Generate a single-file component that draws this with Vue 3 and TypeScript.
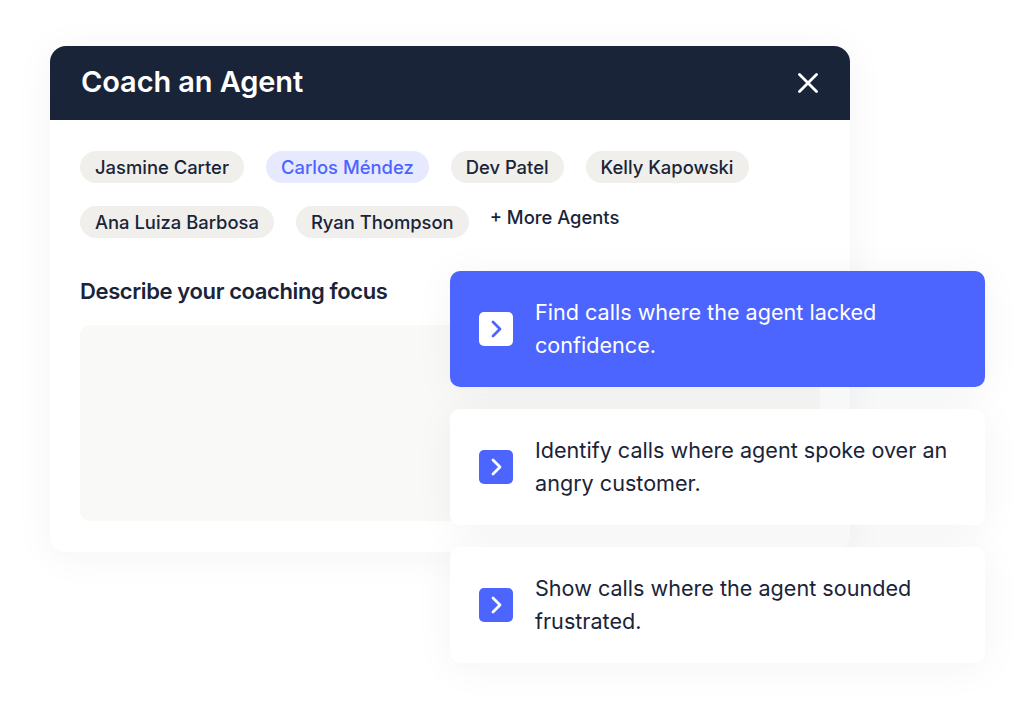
<script setup lang="ts">
const row1 = [
  { name: "Jasmine Carter", active: false },
  { name: "Carlos Méndez", active: true },
  { name: "Dev Patel", active: false },
  { name: "Kelly Kapowski", active: false },
];
const row2 = ["Ana Luiza Barbosa", "Ryan Thompson"];

const suggestions = [
  { text: "Find calls where the agent lacked confidence.", selected: true },
  { text: "Identify calls where agent spoke over an angry customer.", selected: false },
  { text: "Show calls where the agent sounded frustrated.", selected: false },
];
</script>

<template>
  <div class="page">
    <section class="modal">
      <header class="modal-header">
        <h1 class="modal-title">Coach an Agent</h1>
        <button class="close-btn" aria-label="Close">
          <svg viewBox="0 0 20 20" width="20" height="20" fill="none" stroke="currentColor" stroke-width="2.8" stroke-linecap="round">
            <path d="M1.5 1.5l17 17M18.5 1.5l-17 17" />
          </svg>
        </button>
      </header>
      <div class="modal-body">
        <div class="chip-row">
          <span v-for="agent in row1" :key="agent.name" class="chip" :class="{ active: agent.active }">{{ agent.name }}</span>
        </div>
        <div class="chip-row">
          <span v-for="name in row2" :key="name" class="chip">{{ name }}</span>
          <span class="more">+ More Agents</span>
        </div>
        <h2 class="focus-label">Describe your coaching focus</h2>
        <div class="focus-input"></div>
      </div>
    </section>

    <div class="suggestions">
      <div v-for="item in suggestions" :key="item.text" class="suggestion" :class="{ selected: item.selected }">
        <span class="arrow">
          <svg viewBox="0 0 12 18" width="12" height="18" fill="none" stroke="currentColor" stroke-width="2.8" stroke-linecap="round" stroke-linejoin="round">
            <path d="M3 2l7 7-7 7" />
          </svg>
        </span>
        <p class="suggestion-text">{{ item.text }}</p>
      </div>
    </div>
  </div>
</template>

<style>
html,
body {
  margin: 0;
  background: #fff;
  overflow: hidden;
}
</style>

<style scoped>
.page {
  position: relative;
  width: 1024px;
  height: 705px;
  overflow: hidden;
  background: #fff;
  font-family: Inter, "Liberation Sans", sans-serif;
  color: #1a2438;
}

.modal {
  position: absolute;
  left: 50px;
  top: 46px;
  width: 800px;
  height: 506px;
  border-radius: 16px;
  background: #fff;
  box-shadow: 0 4px 40px rgba(26, 36, 56, 0.05);
  overflow: hidden;
}

.modal-header {
  display: flex;
  align-items: center;
  justify-content: space-between;
  height: 74px;
  padding: 0 32px 0 30px;
  background: #1a2438;
  color: #fff;
}

.modal-title {
  margin: -4px 0 0 1px;
  font-size: 29px;
  font-weight: 600;
  letter-spacing: -0.1px;
}

.close-btn {
  display: flex;
  padding: 0;
  border: none;
  background: none;
  color: #fff;
}

.modal-body {
  padding: 31px 30px 0;
}

.chip-row {
  display: flex;
  align-items: flex-start;
  gap: 22px;
  margin-bottom: 23px;
}

.chip {
  display: flex;
  align-items: center;
  height: 32px;
  padding: 0 15px;
  border-radius: 16px;
  background: #f0efec;
  font-size: 18.4px;
  font-weight: 500;
  white-space: nowrap;
}

.chip.active {
  background: #e7eaff;
  color: #4d65ff;
}

.more {
  margin-left: -1px;
  font-size: 18.4px;
  font-weight: 500;
  line-height: 22px;
  white-space: nowrap;
}

.focus-label {
  margin: 39px 0 20px;
  font-size: 22px;
  font-weight: 600;
  line-height: 28px;
  letter-spacing: -0.38px;
}

.focus-input {
  height: 196px;
  border-radius: 10px;
  background: #f9f9f7;
}

.suggestions {
  position: absolute;
  left: 450px;
  top: 271px;
  display: flex;
  flex-direction: column;
  gap: 22.5px;
  width: 535px;
}

.suggestion {
  display: flex;
  align-items: center;
  gap: 22px;
  height: 115.5px;
  padding: 0 30px 0 29px;
  box-sizing: border-box;
  border-radius: 10px;
  background: #fff;
  box-shadow: 0 4px 40px rgba(26, 36, 56, 0.05);
}

.suggestion.selected {
  background: #4d65ff;
  color: #fff;
}

.arrow {
  display: flex;
  flex: none;
  align-items: center;
  justify-content: center;
  width: 34px;
  height: 34px;
  border-radius: 5px;
  background: #4d65ff;
  color: #fff;
}

.selected .arrow {
  background: #fff;
  color: #4d65ff;
}

.suggestion-text {
  margin: 0;
  font-size: 21.6px;
  line-height: 33px;
}
</style>
